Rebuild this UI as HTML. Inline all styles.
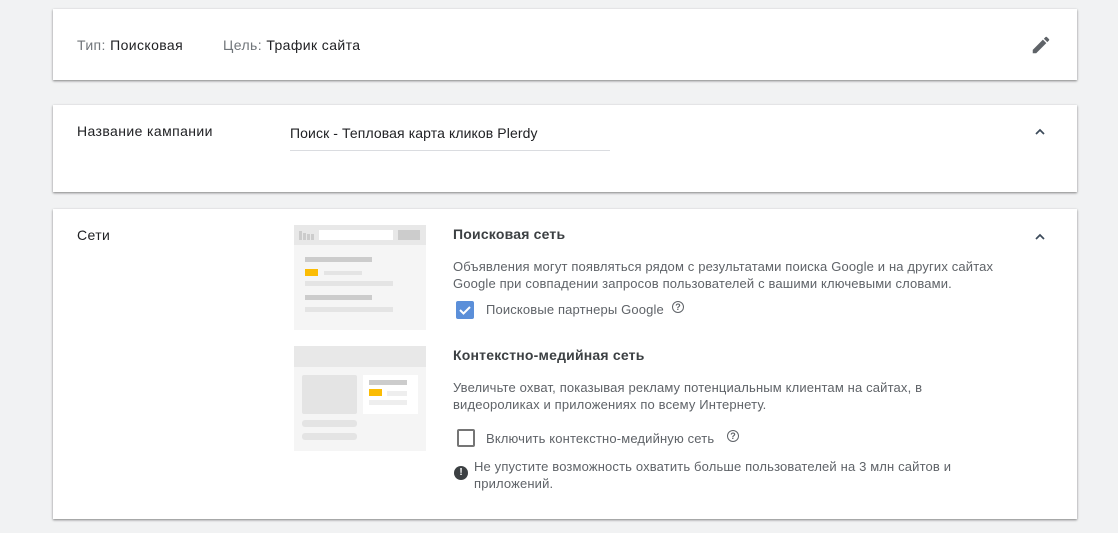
<!DOCTYPE html>
<html><head><meta charset="utf-8"><style>
body{margin:0;background:#f1f2f3;font-family:"Liberation Sans",sans-serif;width:1118px;height:533px;overflow:hidden;position:relative;color:#202124}
.card{position:absolute;left:53px;width:1024px;background:#fff;box-shadow:0 1px 2px rgba(0,0,0,.35),0 1px 3px rgba(0,0,0,.15)}
.t{position:absolute;white-space:nowrap;font-size:14px;letter-spacing:0.4px}
.g{color:#70757a}
.s{font-size:13px;color:#5f6368;line-height:17px;letter-spacing:0.15px}
.b{position:absolute}
</style></head><body>
<div class="card" style="top:9px;height:71px">
 <div class="t" style="left:24px;top:28px"><span class="g">Тип:</span> Поисковая</div>
 <div class="t" style="left:170px;top:28px"><span class="g">Цель:</span> Трафик сайта</div>
 <svg class="b" style="left:977px;top:25px" width="22" height="22" viewBox="0 0 24 24"><path fill="#5f6368" d="M3 17.25V21h3.75L17.81 9.94l-3.75-3.75L3 17.25zM20.71 7.04a1 1 0 0 0 0-1.41l-2.34-2.34a1 1 0 0 0-1.41 0l-1.83 1.83 3.75 3.75 1.83-1.83z"/></svg>
</div>
<div class="card" style="top:105px;height:87px">
 <div class="t" style="left:24px;top:18px">Название кампании</div>
 <div class="t" style="left:237px;top:20px;letter-spacing:0.1px">Поиск - Тепловая карта кликов Plerdy</div>
 <div class="b" style="left:237px;top:45px;width:320px;height:1px;background:#dadce0"></div>
 <svg class="b" style="left:982px;top:23px" width="10" height="7" viewBox="0 0 10 7"><path d="M1 6l4-4 4 4" fill="none" stroke="#3c4a5a" stroke-width="1.7"/></svg>
</div>
<div class="card" style="top:209px;height:310px">
 <div class="t" style="left:24px;top:18px">Сети</div>
 <svg class="b" style="left:982px;top:24px" width="10" height="7" viewBox="0 0 10 7"><path d="M1 6l4-4 4 4" fill="none" stroke="#3c4a5a" stroke-width="1.7"/></svg>
 <svg class="b" style="left:241px;top:16px" width="133" height="226" viewBox="0 0 133 226">
  <rect x="0" y="0" width="132" height="105" fill="#f5f5f5"/>
  <rect x="0" y="0" width="132" height="20" fill="#e8e8e8"/>
  <rect x="5" y="6" width="3" height="9" fill="#ccc"/><rect x="9" y="8" width="3" height="7" fill="#ccc"/><rect x="13" y="9" width="3" height="6" fill="#ccc"/><rect x="17" y="9" width="3" height="6" fill="#ccc"/>
  <rect x="25" y="5" width="74" height="10" fill="#fff"/>
  <rect x="104" y="5" width="22" height="10" fill="#ccc"/>
  <rect x="11" y="32" width="67" height="5" fill="#ccc"/>
  <rect x="11" y="44" width="13" height="7" fill="#fbbc04"/>
  <rect x="30" y="46" width="38" height="4" fill="#e4e4e4"/>
  <rect x="11" y="56" width="88" height="5" fill="#e4e4e4"/>
  <rect x="11" y="70" width="67" height="5" fill="#ccc"/>
  <rect x="11" y="82" width="88" height="5" fill="#e4e4e4"/>
  <rect x="0" y="121" width="132" height="105" fill="#f5f5f5"/>
  <rect x="0" y="121" width="132" height="21" fill="#e8e8e8"/>
  <rect x="8" y="150" width="55" height="39" rx="2" fill="#e4e4e4"/>
  <rect x="69" y="150" width="55" height="39" fill="#fff"/>
  <rect x="75" y="155" width="38" height="5" fill="#ccc"/>
  <rect x="75" y="164" width="13" height="7" fill="#fbbc04"/>
  <rect x="93" y="166" width="20" height="5" fill="#eee"/>
  <rect x="75" y="175" width="38" height="5" fill="#eee"/>
  <rect x="8" y="195" width="55" height="7" rx="3" fill="#e4e4e4"/>
  <rect x="8" y="208" width="55" height="7" rx="3" fill="#e4e4e4"/>
 </svg>
 <div class="t" style="left:400px;top:17px;font-weight:bold;color:#3c4043;letter-spacing:0.2px">Поисковая сеть</div>
 <div class="t s" style="left:400px;top:49px">Объявления могут появляться рядом с результатами поиска Google и на других сайтах<br>Google при совпадении запросов пользователей с вашими ключевыми словами.</div>
 <div class="b" style="left:403px;top:92px;width:18px;height:18px;background:#5b8fd9;border-radius:2px"></div>
 <svg class="b" style="left:403px;top:92px" width="18" height="18" viewBox="0 0 18 18"><path d="M4 9l3.5 3.5L14 6" fill="none" stroke="#fff" stroke-width="2"/></svg>
 <div class="t s" style="left:433px;top:92px">Поисковые партнеры Google</div>
 <div class="b" style="left:619px;top:92px;width:10px;height:10px;border:1.5px solid #5f6368;border-radius:50%;font-size:9px;line-height:10px;text-align:center;color:#5f6368;font-weight:bold">?</div>
 <div class="t" style="left:400px;top:138px;font-weight:bold;color:#3c4043;letter-spacing:0.2px">Контекстно-медийная сеть</div>
 <div class="t s" style="left:400px;top:170px">Увеличьте охват, показывая рекламу потенциальным клиентам на сайтах, в<br>видеороликах и приложениях по всему Интернету.</div>
 <div class="b" style="left:404px;top:220px;width:14px;height:14px;border:2px solid #757575;border-radius:2px"></div>
 <div class="t s" style="left:433px;top:221px">Включить контекстно-медийную сеть</div>
 <div class="b" style="left:674px;top:221px;width:10px;height:10px;border:1.5px solid #5f6368;border-radius:50%;font-size:9px;line-height:10px;text-align:center;color:#5f6368;font-weight:bold">?</div>
 <div class="b" style="left:401px;top:257px;width:14px;height:14px;background:#3c4043;border-radius:50%;color:#fff;font-size:10px;line-height:14px;text-align:center;font-weight:bold">!</div>
 <div class="t s" style="left:421px;top:249px">Не упустите возможность охватить больше пользователей на 3 млн сайтов и<br>приложений.</div>
</div>
</body></html>
